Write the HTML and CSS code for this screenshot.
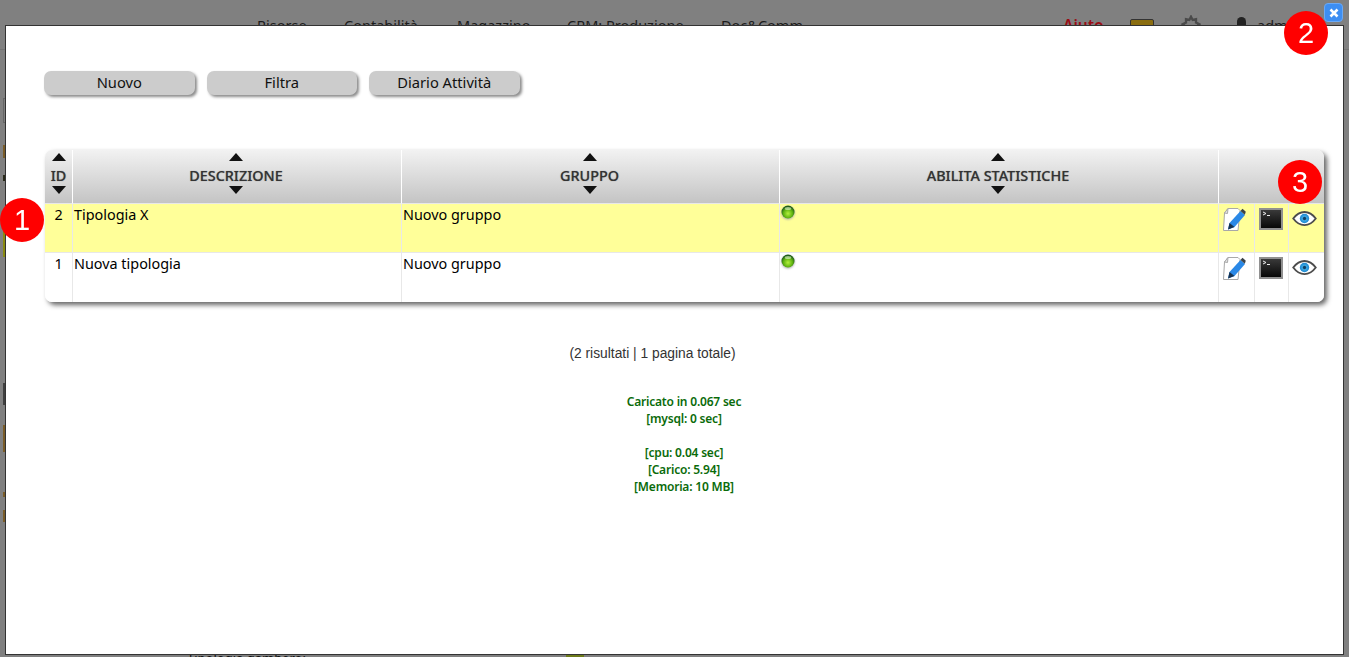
FILE: index.html
```html
<!DOCTYPE html>
<html lang="it">
<head>
    <meta charset="UTF-8">
    <title>Tipologie</title>
    <link rel="stylesheet" href="styles.css">
</head>
<body>

    <!-- pagina dietro il popup -->
    <div class="page">
        <div class="topnav">
            <a class="nav1">Risorse</a>
            <a class="nav2">Contabilità</a>
            <a class="nav3">Magazzino</a>
            <a class="nav4">CRM: Produzione</a>
            <a class="nav5">Doc&amp;Comm</a>
            <a class="aiuto">Aiuto</a>
            <span class="mailbox"></span>
            <svg class="gear" viewBox="0 0 24 24" width="20" height="20"><path d="M12 2l2 4 4-1 0 4 4 2-3 3 1 4-4 0-4 3-4-3-4 0 1-4-3-3 4-2 0-4 4 1z" fill="none" stroke="#4a4a4a" stroke-width="2.8"/></svg>
            <span class="userdot"></span>
            <a class="admin">admin</a>
        </div>
        <div class="page-line"></div>
        <div class="side-marks">
            <span class="mark box"></span>
            <span class="mark brown m1"></span>
            <span class="mark tick"></span>
            <span class="mark olive"></span>
            <span class="mark dark"></span>
            <span class="mark brown m2"></span>
            <span class="mark brown m3"></span>
            <span class="mark brown m4"></span>
        </div>
        <div class="page-bottom">
            <span class="bottom-label">Tipologia gambero:</span>
            <span class="bottom-chip"></span>
        </div>
    </div>

    <svg class="sprite" width="0" height="0">
        <defs>
            <radialGradient id="orbFill" cx="50%" cy="62%" r="55%">
                <stop offset="0" stop-color="#b4f03c"/>
                <stop offset="0.65" stop-color="#5cb010"/>
                <stop offset="1" stop-color="#1f5c18"/>
            </radialGradient>
            <radialGradient id="irisFill" cx="50%" cy="50%" r="50%">
                <stop offset="0" stop-color="#58c4f4"/>
                <stop offset="1" stop-color="#1a86cf"/>
            </radialGradient>
            <linearGradient id="termFill" x1="0" y1="0" x2="0" y2="1">
                <stop offset="0" stop-color="#3c3c3c"/>
                <stop offset="1" stop-color="#050505"/>
            </linearGradient>
        </defs>
        <symbol id="i-orb" viewBox="0 0 14 14">
            <circle cx="7" cy="7" r="6.5" fill="url(#orbFill)"/>
            <ellipse cx="7" cy="3.4" rx="3.2" ry="1.5" fill="#fff" opacity=".5"/>
        </symbol>
        <symbol id="i-edit" viewBox="0 0 24 24">
            <path d="M6 1.5h10l2 2-2 20H1.5L2.5 6z" fill="#fff" stroke="#a8a8a8"/>
            <path d="M6 1.5L5.5 6.5l-3-.5z" fill="#e6e6e6" stroke="#a8a8a8"/>
            <path d="M18.5 4l4.5 4-10.5 12-6.5 2.5 1.5-6.5z" fill="#2a88e6"/>
            <path d="M18.5 4l2-2.2 3.3 3-1 3z" fill="#3a4248"/>
            <path d="M7.5 16l5 4-6.5 2.5z" fill="#17324f"/>
        </symbol>
        <symbol id="i-term" viewBox="0 0 24 22">
            <rect x="1" y="1" width="22" height="20" fill="url(#termFill)" stroke="#909090" stroke-width="2"/>
            <path d="M4 4l3 1.5-3 1.5M8 7.5h3" fill="none" stroke="#eee" stroke-width="1"/>
        </symbol>
        <symbol id="i-eye" viewBox="0 0 26 16">
            <path d="M1 8C5 2.6 9 1 13 1s8 1.6 12 7c-4 5.4-8 7-12 7S5 13.4 1 8z" fill="#fff" stroke="#4c4c4c" stroke-width="2"/>
            <circle cx="13" cy="8" r="5" fill="url(#irisFill)"/>
            <circle cx="13" cy="8" r="1.8" fill="#123f63"/>
        </symbol>
    </svg>

    <div class="popup">
        <div class="toolbar">
            <button class="btn">Nuovo</button>
            <button class="btn">Filtra</button>
            <button class="btn">Diario Attività</button>
        </div>

        <table class="grid">
            <colgroup>
                <col class="c-id"><col class="c-desc"><col class="c-group"><col class="c-stat">
                <col class="c-act"><col class="c-act2"><col class="c-act3">
            </colgroup>
            <thead>
                <tr>
                    <th><div class="sort"><i class="up"></i><span>ID</span><i class="down"></i></div></th>
                    <th><div class="sort wide"><i class="up"></i><span>DESCRIZIONE</span><i class="down"></i></div></th>
                    <th><div class="sort wide"><i class="up"></i><span>GRUPPO</span><i class="down"></i></div></th>
                    <th><div class="sort wide"><i class="up"></i><span>ABILITA STATISTICHE</span><i class="down"></i></div></th>
                    <th colspan="3"></th>
                </tr>
            </thead>
            <tbody>
                <tr class="row-hl">
                    <td class="num">2</td>
                    <td>Tipologia X</td>
                    <td>Nuovo gruppo</td>
                    <td><svg class="orb"><use href="#i-orb"/></svg></td>
                    <td class="act"><svg class="ic-edit"><use href="#i-edit"/></svg></td>
                    <td class="act"><svg class="ic-term"><use href="#i-term"/></svg></td>
                    <td class="act"><svg class="ic-eye"><use href="#i-eye"/></svg></td>
                </tr>
                <tr>
                    <td class="num">1</td>
                    <td>Nuova tipologia</td>
                    <td>Nuovo gruppo</td>
                    <td><svg class="orb"><use href="#i-orb"/></svg></td>
                    <td class="act"><svg class="ic-edit"><use href="#i-edit"/></svg></td>
                    <td class="act"><svg class="ic-term"><use href="#i-term"/></svg></td>
                    <td class="act"><svg class="ic-eye"><use href="#i-eye"/></svg></td>
                </tr>
            </tbody>
        </table>

        <p class="pager">(2 risultati | 1 pagina totale)</p>

        <div class="stats">
            Caricato in 0.067 sec<br>
            [mysql: 0 sec]<br>
            <br>
            [cpu: 0.04 sec]<br>
            [Carico: 5.94]<br>
            [Memoria: 10 MB]
        </div>
    </div>

    <button class="close" aria-label="Chiudi">
        <svg viewBox="0 0 10 10" width="10" height="10"><path d="M1.5 1.5l7 7M8.5 1.5l-7 7" stroke="#fff" stroke-width="2.6"/></svg>
    </button>

    <div class="badge b1">1</div>
    <div class="badge b2">2</div>
    <div class="badge b3">3</div>

</body>
</html>
```

FILE: styles.css
```css
html, body { margin: 0; height: 100%; overflow: hidden; }
body { background: #808080; font-family: "Noto Sans", Arial, sans-serif; font-size: 14.4px; color: #000; }

/* pagina dietro */
.page { height: 657px; display: flex; flex-direction: column; position: relative; }
.topnav { display: flex; align-items: center; height: 49px; padding-left: 257px; color: #1c1c1c; font-size: 14.5px; }
.topnav a { white-space: nowrap; }
.nav1 { width: 87px; }
.nav2 { width: 113px; }
.nav3 { width: 110px; }
.nav4 { width: 154px; }
.nav5 { width: 342px; }
.aiuto { width: 67px; color: #9a0d14; font-weight: 600; font-size: 15.5px; }
.mailbox { width: 22px; height: 14px; margin: 4px 27px 0 0; background: #8a6d10; border: 1px solid #333; border-radius: 2px; }
.gear { margin-right: 36px; }
.userdot { width: 9px; height: 16px; margin-right: 11px; background: #222; border-radius: 5px; }
.page-line { height: 1px; background: #737373; }
.side-marks { display: flex; flex-direction: column; align-items: flex-start; padding: 48px 0 0 3px; flex: 1; }
.mark { display: block; width: 2px; }
.box { height: 23px; width: 2px; border: 1px solid #666; border-right: none; margin-bottom: 22px; }
.brown { background: #7a5c28; }
.m1 { height: 13px; margin-bottom: 17px; }
.tick { height: 6px; background: #2a2a1a; margin-bottom: 41px; }
.olive { height: 35px; background: #8a8a10; margin-bottom: 126px; }
.dark { height: 22px; background: #404040; margin-bottom: 20px; }
.m2 { height: 27px; margin-bottom: 40px; }
.m3 { height: 5px; margin-bottom: 13px; }
.m4 { height: 12px; }
.page-bottom { display: flex; align-items: flex-start; height: 3px; overflow: hidden; padding-left: 187px; font-size: 13px; line-height: 1; color: #111; }
.bottom-label { width: 379px; margin-top: -2px; }
.bottom-chip { width: 18px; height: 3px; background: #6d7a1a; }

/* popup */
.popup { position: fixed; left: 5px; top: 25px; width: 1337px; height: 628px; background: #fff; border: 1px solid #333; }
.toolbar { display: flex; gap: 12px; padding: 45px 0 0 38px; }
.btn { width: 150.5px; height: 24px; padding: 0 0 2px; background: #ccc; border: none; border-radius: 7px; box-shadow: 2px 2px 3px #8a8a8a; font: 14.7px "Noto Sans", Arial, sans-serif; color: #111; cursor: pointer; }

.grid { table-layout: fixed; width: 1279px; margin: 55px 0 0 39px; border-collapse: separate; border-spacing: 0; border-radius: 7px; box-shadow: 3px 3px 5px #666; }
.c-id { width: 28px; }
.c-desc { width: 329px; }
.c-group { width: 378px; }
.c-stat { width: 439px; }
.c-act { width: 36px; }
.c-act2 { width: 34px; }
.c-act3 { width: 35px; }
.grid th { height: 53px; padding: 0; background: linear-gradient(#f2f2f2, #c4c4c4); border-right: 1px solid #fff; border-bottom: 1px solid #e8e8e8; color: #333; font-weight: 500; font-size: 14.4px; text-shadow: 0 0 1px #777; }
.grid th:first-child { border-top-left-radius: 7px; }
.grid th:last-child { border-right: none; border-top-right-radius: 7px; }
.sort { display: flex; flex-direction: column; align-items: center; height: 53px; padding-top: 3px; box-sizing: border-box; }
.sort.wide { padding-right: 2px; }
.sort span { line-height: 18px; margin: 6px 0 1px; white-space: nowrap; }
.sort i { display: block; width: 0; height: 0; border-left: 7px solid transparent; border-right: 7px solid transparent; }
.sort .up { border-bottom: 8px solid #111; }
.sort .down { border-top: 8px solid #111; }

.grid td { height: 49px; padding: 1px 1px 0; box-sizing: border-box; vertical-align: top; background: #fff; border-right: 1px solid #e8e8e8; border-bottom: 1px solid #e8e8e8; line-height: 20px; white-space: nowrap; }
.grid td:last-child { border-right: none; }
.grid tbody tr:last-child td { border-bottom: none; }
.grid tbody tr:last-child td:first-child { border-bottom-left-radius: 7px; }
.grid tbody tr:last-child td:last-child { border-bottom-right-radius: 7px; }
.grid .row-hl td { background: #ffff99; }
.grid .num { text-align: center; }
.grid .act { padding: 3px 0 0 3px; }

.orb { display: block; width: 14px; height: 14px; filter: drop-shadow(0 1px 1px #aaa); }
.ic-edit { width: 24px; height: 24px; }
.ic-term { width: 24px; height: 22px; margin: 1px 0 0 1px; }
.ic-eye { width: 25px; height: 15px; margin-top: 4px; }
.sprite { position: absolute; }

.pager { margin: 45px 0 0; padding-right: 44px; text-align: center; font: 13.8px/14px "Liberation Sans", Arial, sans-serif; color: #333; }
.stats { margin: 32px 0 0 19px; text-align: center; font-size: 12px; line-height: 17px; font-weight: 600; letter-spacing: -0.2px; color: #0a6b0a; }

/* sopra il popup */
.close { position: fixed; left: 1324px; top: 3px; width: 19px; height: 19px; padding: 0; display: flex; align-items: center; justify-content: center; background: #3d8ef2; border: 1px solid #6aa9f5; border-radius: 4px; }
.badge { position: fixed; width: 44px; height: 44px; border-radius: 50%; background: #f00; color: #fff; font: 29px/44px "Liberation Sans", Arial, sans-serif; text-align: center; }
.b1 { left: 0; top: 198px; }
.b2 { left: 1284px; top: 11px; }
.b3 { left: 1278px; top: 160px; }
```
